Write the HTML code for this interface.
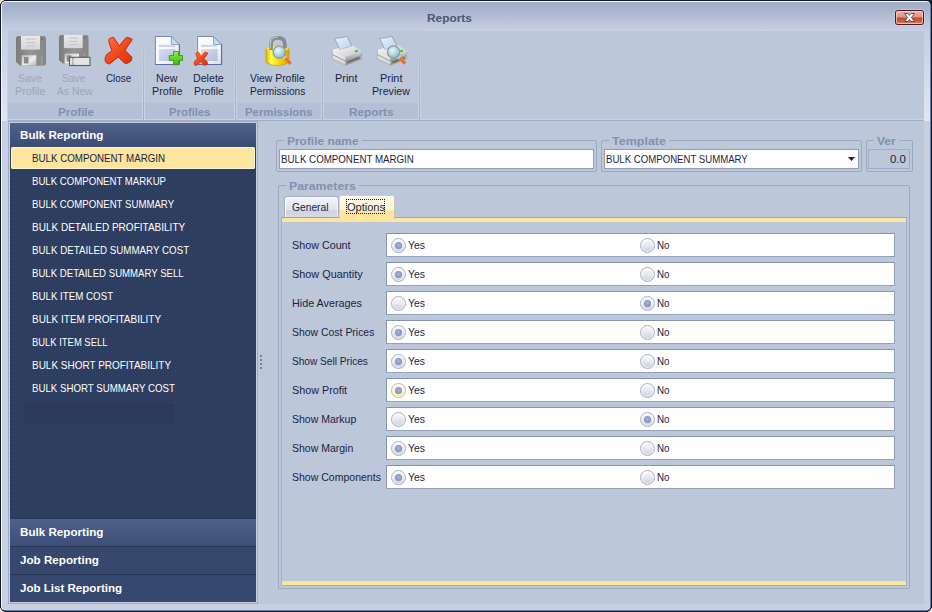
<!DOCTYPE html>
<html lang="en">
<head>
<meta charset="utf-8">
<title>Reports</title>
<style>
html,body{margin:0;padding:0;}
body{width:932px;height:612px;overflow:hidden;background:#0e1526;font-family:'Liberation Sans',sans-serif;font-size:11px;}
#win{position:absolute;left:0;top:0;width:932px;height:612px;background:#111a2d;border-radius:6px 6px 6px 6px;overflow:hidden;}
.corner{position:absolute;width:4px;height:4px;}
#win div,#win span,#win svg{position:absolute;}
.t{white-space:pre;line-height:14px;height:14px;transform-origin:0 50%;}
#frame{left:1px;top:1px;width:930px;height:610px;background:#6b7fa8;border-radius:5px;}
#frame2{left:1px;top:1px;width:929px;height:609px;background:#f4f6fa;border-radius:5px 4px 4px 4px;}
#inner{left:2px;top:2px;width:928px;height:608px;background:#c7cfe0;border-radius:4px;}
.sband{top:30px;width:6px;height:91px;background:linear-gradient(#c6cee0,#e1e6f0);}
#title{left:2px;top:2px;width:928px;height:29px;border-radius:4px 4px 0 0;background:linear-gradient(#a2aeca 0%,#aab5cf 30%,#bcc5da 70%,#c6cee0 100%);}
#content{left:8px;top:30px;width:916px;height:574px;background:#bcc7da;}
#closebtn{left:895px;top:10px;width:29px;height:15px;border-radius:3px;background:#4c1822;box-shadow:0 0 0 1px rgba(215,225,240,.45);}
#closebtn b{position:absolute;left:1px;top:1px;right:1px;bottom:1px;border-radius:2px;background:linear-gradient(#efb4a8 0%,#e3927f 49%,#c0492b 51%,#c9583c 75%,#d98570 100%);box-shadow:inset 0 0 0 1px rgba(255,226,218,.6);}
.gcap{top:103px;height:16px;background:#b4c0d5;}
.gsep{top:31px;width:1px;height:89px;background:linear-gradient(rgba(160,174,200,0) 0%,rgba(160,174,200,.5) 45%,#a0aec8 100%);}
.gsep2{top:31px;width:1px;height:88px;background:linear-gradient(rgba(203,212,228,0) 0%,rgba(203,212,228,.6) 40%,#cbd4e4 100%);}
#ribtop{left:421px;top:30px;width:503px;height:1px;background:#c8d0e2;}
#ribline0{left:8px;top:119px;width:916px;height:1px;background:#c9d3e3;}
#ribline{left:8px;top:120px;width:916px;height:1px;background:#a0aec8;}
#nav{left:8px;top:121px;width:250px;height:483px;background:#9dabc5;}
#nav2{left:9px;top:122px;width:248px;height:481px;background:#c5cfe0;}
#navin{left:10px;top:123px;width:246px;height:479px;background-color:#2b3c5e;}
#navhdr{left:0;top:0;width:246px;height:24px;background:linear-gradient(#50628a,#3b4c73);}
#sel{left:1px;top:24px;width:244px;height:22px;border-radius:2px;background:#fde49f;box-shadow:inset 0 0 0 1px #fff4d2;}
.ng{left:0;width:246px;height:28px;}
#ng1{top:395px;height:29px;background:linear-gradient(#4f6187,#3d4f78);border-top:1px solid #283655;border-bottom:1px solid #283655;box-sizing:border-box;}
#ng2{top:424px;height:27px;background:#34466b;}
#ng3{top:451px;height:28px;background:#34466b;border-top:1px solid #283655;box-sizing:border-box;}
.sdot{left:260px;width:2px;height:2px;background:#7182a7;}
.gb{border:1px solid #9ba9c3;border-radius:2px;box-sizing:border-box;}
.gbcap{background:#bcc7da;height:12px;}
.tb{background:#fff;border:1px solid #8f9db9;box-sizing:border-box;}
#tabpage{left:281px;top:217px;width:626px;height:369px;border:1px solid #a3b0c8;border-top-color:#97a5c0;box-sizing:border-box;}
.ybar{left:0;width:624px;height:4px;background:#fde49f;border-radius:1px;}
.tab{box-sizing:border-box;border:1px solid #9ba8c2;border-bottom:none;border-radius:3px 3px 0 0;}
#tab1{left:284px;top:196px;width:55px;height:21px;background:linear-gradient(#f4f6fa 0%,#dfe3ed 64%,#ced4e3 68%,#d3d9e7 100%);box-shadow:inset 1px 1px 0 rgba(255,255,255,.8),inset -1px 0 0 rgba(255,255,255,.6);border-color:#a3afc7;}
#tab2{left:339px;top:195px;width:56px;height:24px;background:linear-gradient(#fffdf3 0%,#fff3d0 60%,#fde5a2 64%,#fde49f 100%);border-color:#c9cdd2 #c9c6b6 #c9c6b6 #d5d8de;}
#focus{left:346px;top:199px;width:39px;height:15px;box-sizing:border-box;border:1px dotted #222;}
.rbox{left:386px;width:509px;height:24px;background:#fff;border:1px solid #8594b1;border-bottom-color:#93a1bc;border-right-color:#93a1bc;box-sizing:border-box;}
.radio{width:15px;height:15px;border-radius:50%;box-sizing:border-box;border:1px solid #a9afbd;background:linear-gradient(#fbfbfd 0%,#e9ebf1 45%,#cdd1dd 100%);box-shadow:inset 0 0 0 1px rgba(255,255,255,.7);}
.radio i{display:none;position:absolute;left:3px;top:3px;width:7px;height:7px;border-radius:50%;background:radial-gradient(circle at 50% 45%,#a9b7d8 0%,#8898c0 55%,#7384ae 100%);}
.radio.on i{display:block;}
.radio.hot{border-color:#c9b98c;background:linear-gradient(#fffef6 0%,#fff6d6 50%,#fde6a0 100%);}
</style>
</head>
<body>
<div class="corner" style="left:0;top:0;background:#f6edd0"></div><div class="corner" style="left:0;top:608px;background:#fff"></div><div class="corner" style="left:928px;top:608px;background:#fff"></div>
<div id="win">
<div id="frame"></div><div id="frame2"></div>
<div id="inner"></div>
<div id="title"></div><div class="sband" style="left:2px;width:5px"></div><div class="sband" style="left:924px"></div>
<div id="content"></div>
<div id="closebtn"><b></b>
<svg style="left:9px;top:3px" width="11" height="9" viewBox="0 0 11 9"><path d="M0.5 0.5 H4 L5.5 2.4 L7 0.5 H10.5 L7.4 4.5 L10.5 8.5 H7 L5.5 6.6 L4 8.5 H0.5 L3.6 4.5Z" fill="#ffffff" stroke="#3c4862" stroke-width="0.9" stroke-linejoin="round"/></svg>
</div>
<!-- ribbon groups -->
<div id="ribtop"></div><div id="ribline0"></div>
<div class="gcap" style="left:8px;width:134px"></div>
<div class="gsep2" style="left:142px"></div><div class="gsep" style="left:143px"></div><div class="gsep2" style="left:144px"></div>
<div class="gcap" style="left:145px;width:89px"></div>
<div class="gsep2" style="left:234px"></div><div class="gsep" style="left:235px"></div><div class="gsep2" style="left:236px"></div>
<div class="gcap" style="left:237px;width:84px"></div>
<div class="gsep2" style="left:321px"></div><div class="gsep" style="left:322px"></div><div class="gsep2" style="left:323px"></div>
<div class="gcap" style="left:324px;width:94px"></div>
<div class="gsep2" style="left:418px"></div><div class="gsep" style="left:419px"></div><div class="gsep2" style="left:420px"></div>
<div id="ribline"></div>
<svg width="0" height="0" style="left:0;top:0"><defs>
<linearGradient id="gFl" x1="0" y1="0" x2="1" y2="0"><stop offset="0" stop-color="#7b7b7b"/><stop offset=".5" stop-color="#969696"/><stop offset="1" stop-color="#858585"/></linearGradient>
<linearGradient id="gLb" x1="0" y1="0" x2="0" y2="1"><stop offset="0" stop-color="#e9e9e9"/><stop offset="1" stop-color="#d6d6d6"/></linearGradient>
<linearGradient id="gSl" x1="0" y1="0" x2="1" y2="1"><stop offset="0" stop-color="#b9b9b9"/><stop offset=".55" stop-color="#efefef"/><stop offset="1" stop-color="#b5b5b5"/></linearGradient>
<linearGradient id="gRed" x1="0" y1="0" x2="1" y2="1"><stop offset="0" stop-color="#ff7a4a"/><stop offset=".5" stop-color="#f4481c"/><stop offset="1" stop-color="#d93210"/></linearGradient>
<linearGradient id="gPg" x1="0" y1="0" x2="1" y2="1"><stop offset="0" stop-color="#ffffff"/><stop offset=".6" stop-color="#f4f6fc"/><stop offset="1" stop-color="#d6dcee"/></linearGradient>
<linearGradient id="gPgIn" x1="0" y1="0" x2="1" y2="1"><stop offset="0" stop-color="#d9def0"/><stop offset="1" stop-color="#b3bcdc"/></linearGradient>
<linearGradient id="gGrn" x1="0" y1="0" x2="0" y2="1"><stop offset="0" stop-color="#8af04e"/><stop offset="1" stop-color="#3fb512"/></linearGradient>
<linearGradient id="gYel" x1="0" y1="0" x2="1" y2="0"><stop offset="0" stop-color="#e6b400"/><stop offset=".22" stop-color="#ffff50"/><stop offset=".55" stop-color="#fbdc00"/><stop offset="1" stop-color="#dba000"/></linearGradient>
<radialGradient id="gLens" cx=".4" cy=".35" r=".7"><stop offset="0" stop-color="#eaf6fb"/><stop offset=".6" stop-color="#a9d4e6"/><stop offset="1" stop-color="#7fb6d2"/></radialGradient>
<linearGradient id="gPap" x1="0" y1="0" x2="1" y2="1"><stop offset="0" stop-color="#eef6ff"/><stop offset="1" stop-color="#b0d0f4"/></linearGradient>
<linearGradient id="gPrT" x1="0" y1="0" x2="1" y2="1"><stop offset="0" stop-color="#fdfdfd"/><stop offset="1" stop-color="#c4c4c4"/></linearGradient>
<linearGradient id="gPrL" x1="0" y1="0" x2="0" y2="1"><stop offset="0" stop-color="#f2f2f2"/><stop offset="1" stop-color="#d0d0d0"/></linearGradient>
<linearGradient id="gPrR" x1="0" y1="0" x2="0" y2="1"><stop offset="0" stop-color="#cdcdcd"/><stop offset="1" stop-color="#8c8c8c"/></linearGradient>
<path id="xshape" d="M8.9 7.3 Q11 5.4 13.5 5.3 L19.4 13.8 Q23 9 26.5 5.3 Q30 5.6 32.3 7.5 Q28.6 13 25 18.2 L31.9 25.2 Q32 27.8 30.5 29.5 Q28 31.4 25.3 31.7 L18.2 25 Q13.6 29 9.4 31.9 Q7.4 31.8 6 30.6 Q4.8 28.8 5.1 27 Q5.4 24.4 6.6 22.6 L12 18.8 Q10 14 8.8 9.4Z" stroke-linejoin="round"/>
<g id="floppy">
<path d="M3.5 1 H28.5 Q31 1 31 3.5 V28 Q31 30.5 28.5 30.5 H5 L1 27 V3.5 Q1 1 3.5 1Z" fill="url(#gFl)"/>
<rect x="6" y="1" width="19" height="13.6" fill="url(#gLb)"/>
<rect x="11" y="3.6" width="9.5" height="1" fill="#c4c4c4"/><rect x="11" y="7.1" width="9.5" height="1" fill="#c4c4c4"/><rect x="11" y="10.5" width="9.5" height="1" fill="#c4c4c4"/>
<rect x="26.2" y="3" width="1.8" height="2" fill="#6f6f6f"/>
<rect x="6.7" y="20.2" width="20.6" height="10.3" fill="#8d8d8d"/>
<rect x="6.7" y="20.2" width="14.6" height="10.3" fill="url(#gSl)"/>
<rect x="9" y="22" width="4.5" height="6.5" fill="#8a8a8a"/>
<rect x="26.4" y="20.2" width="0.9" height="10.3" fill="#a9a9a9"/>
</g>
<g id="page">
<path d="M1 1 H17 L25 9 V29 H1Z" fill="url(#gPg)" stroke="#7d89b5" stroke-width="1" stroke-linejoin="round"/><path d="M25 9 V29 H1" fill="none" stroke="#5d6c9e" stroke-width="1" stroke-linejoin="round"/>
<path d="M17 1 L25 9 H17Z" fill="#bfe0f4" stroke="#7d89b5" stroke-width="0.8" stroke-linejoin="round"/>
<rect x="4.5" y="9.3" width="16" height="2.2" fill="#cfd5ea"/>
<rect x="4.5" y="13.5" width="16.5" height="12" fill="url(#gPgIn)"/>
</g>
<g id="mag">
<path d="M4.6 4.6 L12.5 12.5" stroke="#c9c9c9" stroke-width="3.6" stroke-linecap="round"/>
<path d="M6.2 6.2 L11.6 11.6" stroke="#f0701a" stroke-width="3.2" stroke-linecap="butt"/>
<circle cx="0" cy="0" r="6.1" fill="url(#gLens)" stroke="#9a9a9a" stroke-width="1.3"/>
</g>
<g id="printer">
<path d="M3.6 3.4 Q10 3.2 16 1.3 Q18.6 6.4 21.2 11.3 L8.6 14.8 Q6.6 8.6 3.6 3.4Z" fill="url(#gPap)" stroke="#8f8f8f" stroke-width="0.7" stroke-linejoin="round"/>
<path d="M1.4 15.6 Q1.4 15 2.4 14.7 L7.9 13 L8.6 14.8 L21.2 11.3 L20.8 10.6 Q21.6 10.3 22.4 10.8 L30 15.6 Q30.8 16.2 30.6 17 L14.4 22.2Z" fill="url(#gPrT)"/>
<path d="M1.4 15.6 L14.4 22.2 V30.2 L2 24.4 Q1.4 24 1.4 23.4Z" fill="url(#gPrL)"/>
<path d="M14.4 22.2 L30.6 17 V23.4 Q30.6 24.2 29.8 24.5 L14.4 30.2Z" fill="url(#gPrR)"/>
<path d="M1.4 19.6 L14.4 26 L30.6 20.6" fill="none" stroke="#8a8a8a" stroke-width="0.8"/>
<path d="M16.4 27.4 L28.6 22.8" stroke="#5f5f5f" stroke-width="1.5"/>
<ellipse cx="25.4" cy="16" rx="1.9" ry="1.1" fill="#35c82a" transform="rotate(-18 25.4 16)"/>
<path d="M1.4 15.6 V23.4 Q1.4 24 2 24.4 L14.4 30.2 L29.8 24.5 Q30.6 24.2 30.6 23.4 V17" fill="none" stroke="#9c9c9c" stroke-width="0.6"/>
</g>
</defs></svg>
<svg style="left:15px;top:35px" width="32" height="32" viewBox="0 0 32 32"><use href="#floppy"/></svg>
<svg style="left:58px;top:34px" width="34" height="33" viewBox="0 0 34 33"><use href="#floppy" transform="translate(0 0) scale(0.985 0.97)"/>
<rect x="11.5" y="23.3" width="20.5" height="8.2" fill="#e4e4e4" stroke="#5e5e5e" stroke-width="1.1"/>
<path d="M13.6 24.6 H16.2 M14.9 24.6 V30.2 M13.6 30.2 H16.2" stroke="#8a8a8a" stroke-width="0.7" fill="none"/></svg>
<svg style="left:100px;top:32px" width="40" height="36" viewBox="0 0 40 36"><use href="#xshape" fill="url(#gRed)" stroke="#c41a06" stroke-width="0.9"/></svg>
<svg style="left:154px;top:35px" width="32" height="32" viewBox="0 0 32 32"><use href="#page" transform="translate(0.4 0.5)"/>
<path d="M19.5 16.5 H24.5 V20.5 H28.5 V25.5 H24.5 V29.8 H19.5 V25.5 H15.3 V20.5 H19.5Z" fill="url(#gGrn)" stroke="#36a010" stroke-width="0.9" stroke-linejoin="round"/></svg>
<svg style="left:192px;top:35px" width="32" height="32" viewBox="0 0 32 32"><use href="#page" transform="translate(4.6 0.5)"/>
<use href="#xshape" transform="translate(-0.55 14.35) scale(0.51)" fill="url(#gRed)" stroke="#c8320f" stroke-width="1.4"/></svg>
<svg style="left:262px;top:34px" width="34" height="34" viewBox="0 0 34 34">
<path d="M4 14.2 Q15.5 10.4 27 14.2 V28.6 Q15.5 34.6 4 28.6Z" fill="url(#gYel)" stroke="#c99a00" stroke-width="0.7"/>
<ellipse cx="15.5" cy="14.6" rx="11.2" ry="2.7" fill="#fff060" opacity=".85"/>
<path d="M9 16 V9.8 Q9 3.8 15.9 3.8 Q22.8 3.8 22.8 9.8 V14.5" fill="none" stroke="#8a8a8a" stroke-width="3.8"/>
<path d="M8.3 15 V9.8 Q8.3 3 15.9 3" fill="none" stroke="#c4c4c4" stroke-width="1.1"/>
<use href="#mag" transform="translate(17.2 18.2)"/></svg>
<svg style="left:331px;top:35px" width="32" height="32" viewBox="0 0 32 32"><use href="#printer"/></svg>
<svg style="left:376px;top:35px" width="34" height="32" viewBox="0 0 34 32"><use href="#printer"/>
<use href="#mag" transform="translate(17.6 17)"/></svg>

<!-- nav -->
<div id="nav"></div><div id="nav2"></div><div id="navin">
<svg width="246" height="479" style="left:0;top:0" shape-rendering="crispEdges"><defs><pattern id="dots" width="4" height="4" patternUnits="userSpaceOnUse"><rect x="3" y="2" width="1" height="1" fill="#384d76"/><rect x="1" y="0" width="1" height="1" fill="#384d76"/></pattern><pattern id="dots2" width="4" height="4" patternUnits="userSpaceOnUse"><rect x="1" y="1" width="1" height="1" fill="#3e537c"/><rect x="3" y="3" width="1" height="1" fill="#3e537c"/></pattern></defs><rect width="246" height="479" fill="url(#dots)"/></svg>
<div style="left:14px;top:280px;width:151px;height:21px;background:#2d3a59"></div>
<div id="navhdr"></div>
<div id="sel"></div>
<div class="ng" id="ng1"></div><div class="ng" id="ng2"><svg width="246" height="27" style="left:0;top:0" shape-rendering="crispEdges"><rect width="246" height="27" fill="url(#dots2)"/></svg></div><div class="ng" id="ng3"><svg width="246" height="27" style="left:0;top:0" shape-rendering="crispEdges"><rect width="246" height="27" fill="url(#dots2)"/></svg></div>
</div>
<div class="sdot" style="top:355px"></div><div class="sdot" style="top:359px"></div><div class="sdot" style="top:363px"></div><div class="sdot" style="top:367px"></div>
<!-- right panel -->
<div class="gb" style="left:276px;top:140px;width:321px;height:32px"></div>
<div class="gbcap" style="left:284px;top:135px;width:78px"></div>
<div class="tb" style="left:279px;top:149px;width:315px;height:20px"></div>
<div class="gb" style="left:601px;top:140px;width:261px;height:32px"></div>
<div class="gbcap" style="left:609px;top:135px;width:60px"></div>
<div class="tb" style="left:604px;top:149px;width:255px;height:20px"></div>
<svg style="left:848px;top:157px" width="7" height="4" viewBox="0 0 7 4"><path d="M0 0H7L3.5 4Z" fill="#1b1f3f"/></svg>
<div class="gb" style="left:866px;top:140px;width:47px;height:32px"></div>
<div class="gbcap" style="left:874px;top:135px;width:25px"></div>
<div class="tb" style="left:868px;top:149px;width:42px;height:20px;background:#bcc7da;border-color:#a0adc6"></div>
<div class="gb" style="left:278px;top:185px;width:632px;height:404px"></div>
<div class="gbcap" style="left:286px;top:180px;width:73px"></div>
<div id="tabpage"><div class="ybar" style="top:0"></div><div class="ybar" style="top:363px"></div></div>
<div class="tab" id="tab1"></div>
<div class="tab" id="tab2"></div>
<div id="focus"></div>
<div class="rbox" style="top:233px"></div>
<div class="radio on" style="left:391px;top:238px"><i></i></div>
<div class="radio" style="left:640px;top:238px"><i></i></div>
<div class="rbox" style="top:262px"></div>
<div class="radio on" style="left:391px;top:267px"><i></i></div>
<div class="radio" style="left:640px;top:267px"><i></i></div>
<div class="rbox" style="top:291px"></div>
<div class="radio" style="left:391px;top:296px"><i></i></div>
<div class="radio on" style="left:640px;top:296px"><i></i></div>
<div class="rbox" style="top:320px"></div>
<div class="radio on" style="left:391px;top:325px"><i></i></div>
<div class="radio" style="left:640px;top:325px"><i></i></div>
<div class="rbox" style="top:349px"></div>
<div class="radio on" style="left:391px;top:354px"><i></i></div>
<div class="radio" style="left:640px;top:354px"><i></i></div>
<div class="rbox" style="top:378px"></div>
<div class="radio on hot" style="left:391px;top:383px"><i></i></div>
<div class="radio" style="left:640px;top:383px"><i></i></div>
<div class="rbox" style="top:407px"></div>
<div class="radio" style="left:391px;top:412px"><i></i></div>
<div class="radio on" style="left:640px;top:412px"><i></i></div>
<div class="rbox" style="top:436px"></div>
<div class="radio on" style="left:391px;top:441px"><i></i></div>
<div class="radio" style="left:640px;top:441px"><i></i></div>
<div class="rbox" style="top:465px"></div>
<div class="radio on" style="left:391px;top:470px"><i></i></div>
<div class="radio" style="left:640px;top:470px"><i></i></div>
<span class="t" id="t0" style="left:426.90px;top:11.19px;font-size:11px;font-weight:700;color:#4a5777;transform:scaleX(1.0803);">Reports</span>
<span class="t" id="t1" style="left:18.00px;top:71.19px;font-size:11px;font-weight:400;color:#a0a6b5;transform:scaleX(0.9530);">Save</span>
<span class="t" id="t2" style="left:14.50px;top:84.19px;font-size:11px;font-weight:400;color:#a0a6b5;transform:scaleX(0.9747);">Profile</span>
<span class="t" id="t3" style="left:62.20px;top:71.19px;font-size:11px;font-weight:400;color:#a0a6b5;transform:scaleX(0.9331);">Save</span>
<span class="t" id="t4" style="left:56.50px;top:84.19px;font-size:11px;font-weight:400;color:#a0a6b5;transform:scaleX(0.9392);">As New</span>
<span class="t" id="t5" style="left:105.50px;top:71.19px;font-size:11px;font-weight:400;color:#1b1f3f;transform:scaleX(0.8960);">Close</span>
<span class="t" id="t6" style="left:155.80px;top:71.19px;font-size:11px;font-weight:400;color:#1b1f3f;transform:scaleX(0.9720);">New</span>
<span class="t" id="t7" style="left:151.50px;top:84.19px;font-size:11px;font-weight:400;color:#1b1f3f;transform:scaleX(0.9747);">Profile</span>
<span class="t" id="t8" style="left:193.20px;top:71.19px;font-size:11px;font-weight:400;color:#1b1f3f;transform:scaleX(0.9686);">Delete</span>
<span class="t" id="t9" style="left:194.10px;top:84.19px;font-size:11px;font-weight:400;color:#1b1f3f;transform:scaleX(0.9587);">Profile</span>
<span class="t" id="t10" style="left:250.30px;top:71.19px;font-size:11px;font-weight:400;color:#1b1f3f;transform:scaleX(0.9449);">View Profile</span>
<span class="t" id="t11" style="left:249.90px;top:84.19px;font-size:11px;font-weight:400;color:#1b1f3f;transform:scaleX(0.9231);">Permissions</span>
<span class="t" id="t12" style="left:335.10px;top:71.19px;font-size:11px;font-weight:400;color:#1b1f3f;transform:scaleX(0.9945);">Print</span>
<span class="t" id="t13" style="left:379.70px;top:71.19px;font-size:11px;font-weight:400;color:#1b1f3f;transform:scaleX(0.9945);">Print</span>
<span class="t" id="t14" style="left:371.80px;top:84.19px;font-size:11px;font-weight:400;color:#1b1f3f;transform:scaleX(0.9687);">Preview</span>
<span class="t" id="t15" style="left:57.90px;top:105.19px;font-size:11px;font-weight:700;color:#8190b0;transform:scaleX(1.0516);">Profile</span>
<span class="t" id="t16" style="left:169.00px;top:105.19px;font-size:11px;font-weight:700;color:#8190b0;transform:scaleX(1.0307);">Profiles</span>
<span class="t" id="t17" style="left:245.00px;top:105.19px;font-size:11px;font-weight:700;color:#8190b0;transform:scaleX(1.0318);">Permissions</span>
<span class="t" id="t18" style="left:349.00px;top:105.19px;font-size:11px;font-weight:700;color:#8190b0;transform:scaleX(1.0731);">Reports</span>
<span class="t" id="t19" style="left:19.80px;top:128.19px;font-size:11px;font-weight:700;color:#ffffff;transform:scaleX(1.0578);">Bulk Reporting</span>
<span class="t" id="t20" style="left:32.00px;top:151.19px;font-size:11px;font-weight:400;color:#1b1f3f;transform:scaleX(0.8864);">BULK COMPONENT MARGIN</span>
<span class="t" id="t21" style="left:32.00px;top:174.19px;font-size:11px;font-weight:400;color:#ffffff;transform:scaleX(0.8746);">BULK COMPONENT MARKUP</span>
<span class="t" id="t22" style="left:32.00px;top:197.19px;font-size:11px;font-weight:400;color:#ffffff;transform:scaleX(0.8761);">BULK COMPONENT SUMMARY</span>
<span class="t" id="t23" style="left:32.00px;top:220.19px;font-size:11px;font-weight:400;color:#ffffff;transform:scaleX(0.9102);">BULK DETAILED PROFITABILITY</span>
<span class="t" id="t24" style="left:32.00px;top:243.19px;font-size:11px;font-weight:400;color:#ffffff;transform:scaleX(0.8862);">BULK DETAILED SUMMARY COST</span>
<span class="t" id="t25" style="left:32.00px;top:266.19px;font-size:11px;font-weight:400;color:#ffffff;transform:scaleX(0.8737);">BULK DETAILED SUMMARY SELL</span>
<span class="t" id="t26" style="left:32.00px;top:289.19px;font-size:11px;font-weight:400;color:#ffffff;transform:scaleX(0.8845);">BULK ITEM COST</span>
<span class="t" id="t27" style="left:32.00px;top:312.19px;font-size:11px;font-weight:400;color:#ffffff;transform:scaleX(0.9124);">BULK ITEM PROFITABILITY</span>
<span class="t" id="t28" style="left:32.00px;top:335.19px;font-size:11px;font-weight:400;color:#ffffff;transform:scaleX(0.8564);">BULK ITEM SELL</span>
<span class="t" id="t29" style="left:32.00px;top:358.19px;font-size:11px;font-weight:400;color:#ffffff;transform:scaleX(0.9066);">BULK SHORT PROFITABILITY</span>
<span class="t" id="t30" style="left:32.00px;top:381.19px;font-size:11px;font-weight:400;color:#ffffff;transform:scaleX(0.8806);">BULK SHORT SUMMARY COST</span>
<span class="t" id="t31" style="left:19.80px;top:525.19px;font-size:11px;font-weight:700;color:#ffffff;transform:scaleX(1.0578);">Bulk Reporting</span>
<span class="t" id="t32" style="left:19.80px;top:553.19px;font-size:11px;font-weight:700;color:#ffffff;transform:scaleX(1.0582);">Job Reporting</span>
<span class="t" id="t33" style="left:19.80px;top:581.19px;font-size:11px;font-weight:700;color:#ffffff;transform:scaleX(1.0507);">Job List Reporting</span>
<span class="t" id="t34" style="left:286.80px;top:134.19px;font-size:11px;font-weight:700;color:#8190b0;transform:scaleX(1.0843);">Profile name</span>
<span class="t" id="t35" style="left:611.80px;top:134.19px;font-size:11px;font-weight:700;color:#8190b0;transform:scaleX(1.1372);">Template</span>
<span class="t" id="t36" style="left:876.90px;top:134.19px;font-size:11px;font-weight:700;color:#8190b0;transform:scaleX(1.0910);">Ver</span>
<span class="t" id="t37" style="left:281.20px;top:151.59px;font-size:11px;font-weight:400;color:#1b1f3f;transform:scaleX(0.8844);">BULK COMPONENT MARGIN</span>
<span class="t" id="t38" style="left:606.10px;top:151.59px;font-size:11px;font-weight:400;color:#1b1f3f;transform:scaleX(0.8743);">BULK COMPONENT SUMMARY</span>
<span class="t" id="t39" style="left:889.50px;top:151.59px;font-size:11px;font-weight:400;color:#1b1f3f;transform:scaleX(1.0394);">0.0</span>
<span class="t" id="t40" style="left:289.00px;top:179.19px;font-size:11px;font-weight:700;color:#8190b0;transform:scaleX(1.1162);">Parameters</span>
<span class="t" id="t41" style="left:292.30px;top:200.19px;font-size:11px;font-weight:400;color:#1b1f3f;transform:scaleX(0.9325);">General</span>
<span class="t" id="t42" style="left:346.90px;top:200.19px;font-size:11px;font-weight:400;color:#1b1f3f;transform:scaleX(1.0021);">Options</span>
<span class="t" id="t43" style="left:292.00px;top:238.19px;font-size:11px;font-weight:400;color:#1b1f3f;transform:scaleX(0.9777);">Show Count</span>
<span class="t" id="t44" style="left:408.30px;top:238.19px;font-size:11px;font-weight:400;color:#1b1f3f;transform:scaleX(0.9469);">Yes</span>
<span class="t" id="t45" style="left:657.40px;top:238.19px;font-size:11px;font-weight:400;color:#1b1f3f;transform:scaleX(0.8889);">No</span>
<span class="t" id="t46" style="left:292.00px;top:267.19px;font-size:11px;font-weight:400;color:#1b1f3f;transform:scaleX(0.9882);">Show Quantity</span>
<span class="t" id="t47" style="left:408.30px;top:267.19px;font-size:11px;font-weight:400;color:#1b1f3f;transform:scaleX(0.9469);">Yes</span>
<span class="t" id="t48" style="left:657.40px;top:267.19px;font-size:11px;font-weight:400;color:#1b1f3f;transform:scaleX(0.8889);">No</span>
<span class="t" id="t49" style="left:292.00px;top:296.19px;font-size:11px;font-weight:400;color:#1b1f3f;transform:scaleX(0.9795);">Hide Averages</span>
<span class="t" id="t50" style="left:408.30px;top:296.19px;font-size:11px;font-weight:400;color:#1b1f3f;transform:scaleX(0.9469);">Yes</span>
<span class="t" id="t51" style="left:657.40px;top:296.19px;font-size:11px;font-weight:400;color:#1b1f3f;transform:scaleX(0.8889);">No</span>
<span class="t" id="t52" style="left:292.00px;top:325.19px;font-size:11px;font-weight:400;color:#1b1f3f;transform:scaleX(0.9492);">Show Cost Prices</span>
<span class="t" id="t53" style="left:408.30px;top:325.19px;font-size:11px;font-weight:400;color:#1b1f3f;transform:scaleX(0.9469);">Yes</span>
<span class="t" id="t54" style="left:657.40px;top:325.19px;font-size:11px;font-weight:400;color:#1b1f3f;transform:scaleX(0.8889);">No</span>
<span class="t" id="t55" style="left:292.00px;top:354.19px;font-size:11px;font-weight:400;color:#1b1f3f;transform:scaleX(0.9195);">Show Sell Prices</span>
<span class="t" id="t56" style="left:408.30px;top:354.19px;font-size:11px;font-weight:400;color:#1b1f3f;transform:scaleX(0.9469);">Yes</span>
<span class="t" id="t57" style="left:657.40px;top:354.19px;font-size:11px;font-weight:400;color:#1b1f3f;transform:scaleX(0.8889);">No</span>
<span class="t" id="t58" style="left:292.00px;top:383.19px;font-size:11px;font-weight:400;color:#1b1f3f;transform:scaleX(0.9796);">Show Profit</span>
<span class="t" id="t59" style="left:408.30px;top:383.19px;font-size:11px;font-weight:400;color:#1b1f3f;transform:scaleX(0.9469);">Yes</span>
<span class="t" id="t60" style="left:657.40px;top:383.19px;font-size:11px;font-weight:400;color:#1b1f3f;transform:scaleX(0.8889);">No</span>
<span class="t" id="t61" style="left:292.00px;top:412.19px;font-size:11px;font-weight:400;color:#1b1f3f;transform:scaleX(0.9559);">Show Markup</span>
<span class="t" id="t62" style="left:408.30px;top:412.19px;font-size:11px;font-weight:400;color:#1b1f3f;transform:scaleX(0.9469);">Yes</span>
<span class="t" id="t63" style="left:657.40px;top:412.19px;font-size:11px;font-weight:400;color:#1b1f3f;transform:scaleX(0.8889);">No</span>
<span class="t" id="t64" style="left:292.00px;top:441.19px;font-size:11px;font-weight:400;color:#1b1f3f;transform:scaleX(0.9548);">Show Margin</span>
<span class="t" id="t65" style="left:408.30px;top:441.19px;font-size:11px;font-weight:400;color:#1b1f3f;transform:scaleX(0.9469);">Yes</span>
<span class="t" id="t66" style="left:657.40px;top:441.19px;font-size:11px;font-weight:400;color:#1b1f3f;transform:scaleX(0.8889);">No</span>
<span class="t" id="t67" style="left:292.00px;top:470.19px;font-size:11px;font-weight:400;color:#1b1f3f;transform:scaleX(0.9564);">Show Components</span>
<span class="t" id="t68" style="left:408.30px;top:470.19px;font-size:11px;font-weight:400;color:#1b1f3f;transform:scaleX(0.9469);">Yes</span>
<span class="t" id="t69" style="left:657.40px;top:470.19px;font-size:11px;font-weight:400;color:#1b1f3f;transform:scaleX(0.8889);">No</span>
</div>
</body>
</html>
